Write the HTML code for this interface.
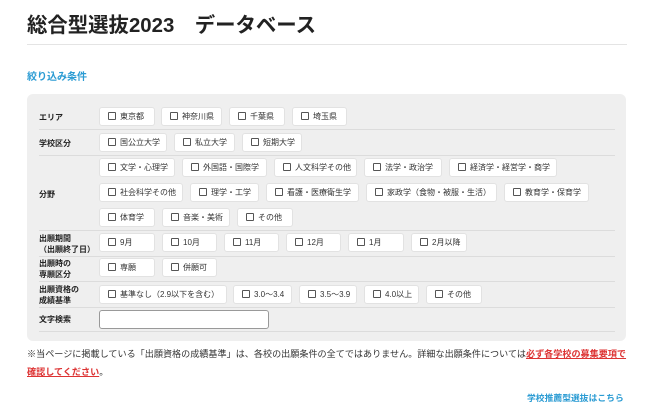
<!DOCTYPE html>
<html><head><meta charset="utf-8"><style>
*{margin:0;padding:0;box-sizing:border-box}
body{width:650px;height:414px;background:#fff;font-family:"Liberation Sans","Noto Sans CJK JP",sans-serif;color:#222;position:relative;overflow:hidden}
.a{position:absolute}
h1{position:absolute;left:27px;top:8px;font-size:20.4px;font-weight:bold;color:#222;white-space:nowrap}
.hr{position:absolute;left:27px;top:44px;width:600px;height:1px;background:#e4e4e4}
.sub{left:27px;top:68px;font-size:10px;font-weight:bold;color:#2a9bd3}
.box{left:27px;top:94px;width:599px;height:247px;background:#efefef;border-radius:6px}
.sep{position:absolute;left:39px;width:576px;height:1px;background:#dcdcdc}
.lb{position:absolute;left:39px;font-size:8px;font-weight:bold;line-height:11px;color:#222}
.b{position:absolute;height:19px;background:#fff;border-radius:3px;border:1px solid #e2e2e2;font-size:8px;line-height:17px;color:#333;padding-left:8px;white-space:nowrap}
.b:before{content:"";display:inline-block;width:6px;height:6px;border:1px solid #555;border-radius:1px;margin-right:4px;vertical-align:-1px}
.inp{left:99px;top:310px;width:170px;height:19px;background:#fff;border:1px solid #999;border-radius:3px}
.note{left:27px;top:345px;font-size:9.1px;line-height:18px;color:#333;width:606px;white-space:nowrap}
.red{color:#d33;font-weight:bold;text-decoration:underline}
.link{left:527px;top:391px;font-size:8.8px;font-weight:bold;color:#2a9bd3}
</style></head><body>
<h1>総合型選抜2023　データベース</h1>
<div class="hr"></div>
<div class="a sub">絞り込み条件</div>
<div class="a box"></div>
<div class="sep" style="top:129px"></div>
<div class="sep" style="top:155px"></div>
<div class="sep" style="top:230px"></div>
<div class="sep" style="top:256px"></div>
<div class="sep" style="top:281px"></div>
<div class="sep" style="top:307px"></div>
<div class="sep" style="top:331px"></div>
<div class="lb" style="top:112px">エリア</div>
<div class="lb" style="top:138px">学校区分</div>
<div class="lb" style="top:189px">分野</div>
<div class="lb" style="top:233px">出願期間<br>（出願終了日）</div>
<div class="lb" style="top:258px">出願時の<br>専願区分</div>
<div class="lb" style="top:284px">出願資格の<br>成績基準</div>
<div class="lb" style="top:314px">文字検索</div>

<div class="b" style="top:107px;left:99px;width:56px">東京都</div>
<div class="b" style="top:107px;left:161px;width:61px">神奈川県</div>
<div class="b" style="top:107px;left:229px;width:56px">千葉県</div>
<div class="b" style="top:107px;left:292px;width:55px">埼玉県</div>

<div class="b" style="top:133px;left:99px;width:68px">国公立大学</div>
<div class="b" style="top:133px;left:174px;width:61px">私立大学</div>
<div class="b" style="top:133px;left:242px;width:60px">短期大学</div>

<div class="b" style="top:158px;left:99px;width:76px">文学・心理学</div>
<div class="b" style="top:158px;left:182px;width:85px">外国語・国際学</div>
<div class="b" style="top:158px;left:274px;width:83px">人文科学その他</div>
<div class="b" style="top:158px;left:364px;width:78px">法学・政治学</div>
<div class="b" style="top:158px;left:449px;width:108px">経済学・経営学・商学</div>

<div class="b" style="top:183px;left:99px;width:84px">社会科学その他</div>
<div class="b" style="top:183px;left:190px;width:69px">理学・工学</div>
<div class="b" style="top:183px;left:266px;width:93px">看護・医療衛生学</div>
<div class="b" style="top:183px;left:366px;width:131px">家政学（食物・被服・生活）</div>
<div class="b" style="top:183px;left:504px;width:85px">教育学・保育学</div>

<div class="b" style="top:208px;left:99px;width:56px">体育学</div>
<div class="b" style="top:208px;left:162px;width:68px">音楽・美術</div>
<div class="b" style="top:208px;left:237px;width:56px">その他</div>

<div class="b" style="top:233px;left:99px;width:56px">9月</div>
<div class="b" style="top:233px;left:162px;width:55px">10月</div>
<div class="b" style="top:233px;left:224px;width:55px">11月</div>
<div class="b" style="top:233px;left:286px;width:55px">12月</div>
<div class="b" style="top:233px;left:348px;width:56px">1月</div>
<div class="b" style="top:233px;left:411px;width:56px">2月以降</div>

<div class="b" style="top:258px;left:99px;width:56px">専願</div>
<div class="b" style="top:258px;left:162px;width:55px">併願可</div>

<div class="b" style="top:285px;left:99px;width:128px">基準なし（2.9以下を含む）</div>
<div class="b" style="top:285px;left:233px;width:59px">3.0〜3.4</div>
<div class="b" style="top:285px;left:299px;width:58px">3.5〜3.9</div>
<div class="b" style="top:285px;left:364px;width:55px">4.0以上</div>
<div class="b" style="top:285px;left:426px;width:56px">その他</div>

<div class="a inp"></div>
<div class="a note">※当ページに掲載している「出願資格の成績基準」は、各校の出願条件の全てではありません。詳細な出願条件については<span class="red">必ず各学校の募集要項で<br>確認してください</span>。</div>
<div class="a link">学校推薦型選抜はこちら</div>
</body></html>
